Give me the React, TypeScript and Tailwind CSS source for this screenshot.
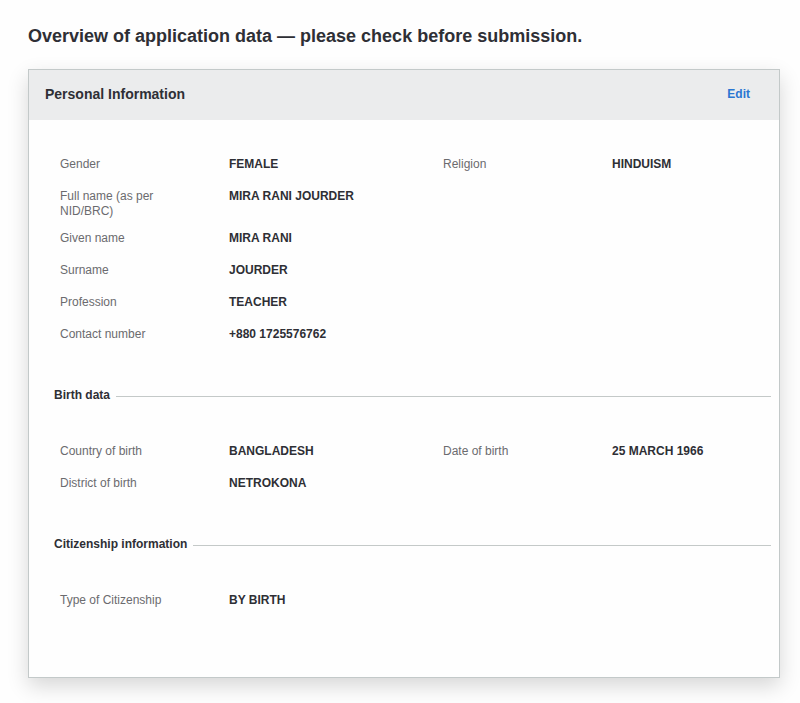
type FieldData = { label: string; value: string };
type Row = FieldData[];

const personal: Row[] = [
  [
    { label: 'Gender', value: 'FEMALE' },
    { label: 'Religion', value: 'HINDUISM' },
  ],
  [{ label: 'Full name (as per NID/BRC)', value: 'MIRA RANI JOURDER' }],
  [{ label: 'Given name', value: 'MIRA RANI' }],
  [{ label: 'Surname', value: 'JOURDER' }],
  [{ label: 'Profession', value: 'TEACHER' }],
  [{ label: 'Contact number', value: '+880 1725576762' }],
];

const birth: Row[] = [
  [
    { label: 'Country of birth', value: 'BANGLADESH' },
    { label: 'Date of birth', value: '25 MARCH 1966' },
  ],
  [{ label: 'District of birth', value: 'NETROKONA' }],
];

const citizenship: Row[] = [[{ label: 'Type of Citizenship', value: 'BY BIRTH' }]];

function Fields({ rows }: { rows: Row[] }) {
  return (
    <dl className="px-1.5">
      {rows.map((row) => (
        <div key={row[0].label} className="grid min-h-8 grid-cols-[383fr_322fr] py-1.5">
          {row.map((field) => (
            <div key={field.label} className="grid grid-cols-[169px_minmax(0,1fr)]">
              <dt className="pr-6 text-[#6b6b6e]">{field.label}</dt>
              <dd className="font-bold">{field.value}</dd>
            </div>
          ))}
        </div>
      ))}
    </dl>
  );
}

function Section({ title, rows }: { title: string; rows: Row[] }) {
  return (
    <section className="mt-[35px]">
      <div className="mb-[35px] flex items-center gap-1.5">
        <h3 className="font-bold">{title}</h3>
        <div className="mt-0.5 flex-1 border-t border-[#c4c9c8]" />
      </div>
      <Fields rows={rows} />
    </section>
  );
}

export default function App() {
  return (
    <main className="min-h-screen bg-[#fefefe] pt-6 pr-5 pb-6 pl-7 font-['Liberation_Sans',Arial,sans-serif] text-xs leading-[15px] text-[#2e2f35]">
      <h1 className="text-lg leading-6 font-bold">
        Overview of application data — please check before submission.
      </h1>
      <section className="mt-[21px] border border-[#c3c9c9] bg-[#fefefe] shadow-[0_8px_20px_rgba(0,0,0,0.16)]">
        <header className="flex h-[50px] items-center justify-between bg-[#ebeced] pr-[29px] pb-0.5 pl-4">
          <h2 className="text-sm font-bold">Personal Information</h2>
          <button type="button" className="cursor-pointer font-bold text-[#2a76d2]">
            Edit
          </button>
        </header>
        <div className="pt-[31px] pr-2 pb-[58px] pl-[25px]">
          <Fields rows={personal} />
          <Section title="Birth data" rows={birth} />
          <Section title="Citizenship information" rows={citizenship} />
        </div>
      </section>
    </main>
  );
}
